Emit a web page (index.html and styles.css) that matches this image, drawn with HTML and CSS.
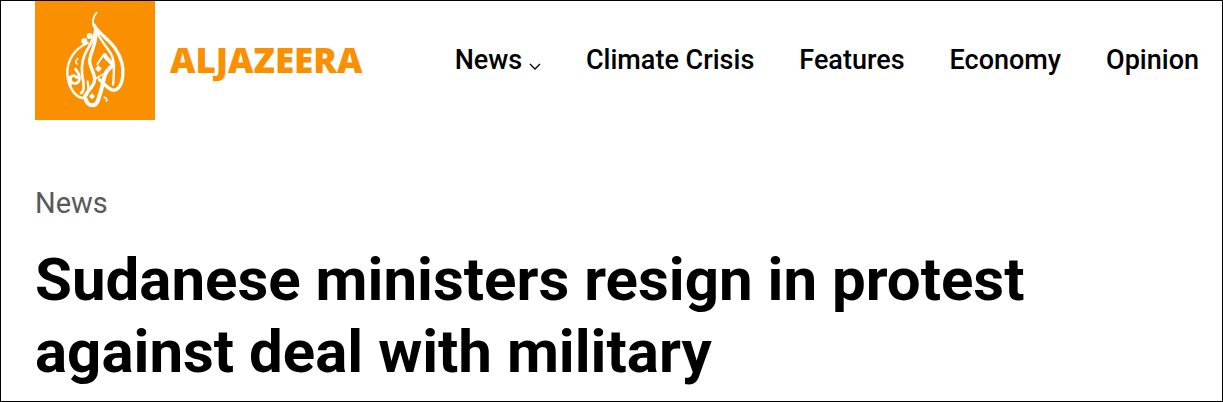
FILE: index.html
```
<!DOCTYPE html>
<html lang="en">
<head>
    <meta charset="UTF-8">
    <meta name="viewport" content="width=device-width, initial-scale=1.0">
    <title>Sudanese ministers resign in protest against deal with military</title>
    <link rel="stylesheet" href="styles.css">
</head>
<body>
    <header class="header">
        <a class="brand" href="#">
            <svg class="brand-logo" viewBox="0 3 360 357" aria-hidden="true">
                <rect width="360" height="360" fill="#fa9000"/>
                <g fill="none" stroke="#fff" stroke-linecap="round" stroke-linejoin="round">
                    <!-- flame tip and right side -->
                    <path d="M185 38C171 54 170 74 182 88" stroke-width="5"/>
                    <path d="M178 76C188 98 222 118 241 146C260 174 267 200 263 230C259 259 246 274 232 270C217 266 207 250 194 239" stroke-width="10"/>
                    <path d="M184 90C194 121 217 141 230 165C240 188 238 218 234 254" stroke-width="7"/>
                    <!-- left side -->
                    <path d="M158 129C121 144 95 180 97 222C98 258 120 292 143 294C160 292 162 270 158 245" stroke-width="7"/>
                    <path d="M181 88C179 121 160 139 149 164C137 192 139 219 145 247C148 268 145 276 138 279" stroke-width="8"/>
                    <path d="M183 98C184 134 166 155 164 182C163 204 183 220 178 244C173 265 151 279 149 290" stroke-width="10"/>
                    <!-- letters -->
                    <path d="M209 165C213 177 228 184 235 196C221 204 210 218 206 239C202 260 198 276 190 298C182 324 160 320 152 298" stroke-width="12"/>
                    <path d="M187 193L203 168M178 238L205 222" stroke-width="6"/>
                    <path d="M121 207C136 224 138 247 123 250C107 252 102 234 111 228C116 225 122 228 126 233M103 232L106 256" stroke-width="8"/>
                    <path d="M128 176C120 183 122 190 127 192M208 292C215 294 217 299 214 303" stroke-width="5"/>
                </g>
                <g fill="#fff">
                    <circle cx="164" cy="108" r="9"/>
                    <circle cx="148" cy="123" r="9"/>
                    <path d="M190 196l10 10-10 10-10-10zM171 280l9 9-9 9-9-9z"/>
                </g>
            </svg>
            <span class="brand-name">ALJAZEERA</span>
        </a>
        <nav class="nav">
            <a class="nav-link" href="#">News
                <svg class="chevron" viewBox="0 0 12 8" aria-hidden="true">
                    <path d="M1 1l5 5 5-5" fill="none" stroke="#000" stroke-width="1.3"/>
                </svg>
            </a>
            <a class="nav-link" href="#">Climate Crisis</a>
            <a class="nav-link" href="#">Features</a>
            <a class="nav-link" href="#">Economy</a>
            <a class="nav-link" href="#">Opinion</a>
        </nav>
    </header>
    <main class="article">
        <a class="topic" href="#">News</a>
        <h1 class="title">Sudanese ministers resign in protest against deal with military</h1>
    </main>
</body>
</html>
```
FILE: styles.css
```
* {
    box-sizing: border-box;
}
body {
    margin: 0;
    min-height: 100vh;
    border: 1px solid #000;
    background: #fff;
    color: #000;
    font-family: Roboto, Arial, sans-serif;
}
a {
    color: inherit;
    text-decoration: none;
}
.header {
    display: flex;
    align-items: center;
    justify-content: space-between;
    padding: 0 23px 0 34px;
}
.brand {
    display: flex;
    align-items: center;
    gap: 15px;
}
.brand-logo {
    display: block;
    width: 120px;
    height: 119px;
}
.brand-name {
    padding-bottom: 2px;
    color: #fa9000;
    font-family: "Open Sans", "Noto Sans", sans-serif;
    font-size: 35px;
    font-weight: 800;
    line-height: 40px;
}
.nav {
    display: flex;
    gap: 45px;
}
.nav-link {
    padding-bottom: 2px;
    font-size: 27px;
    font-weight: 500;
    line-height: 32px;
    white-space: nowrap;
}
.chevron {
    width: 12px;
    height: 8px;
    vertical-align: -2px;
}
.article {
    padding: 66px 34px 0;
}
.topic {
    display: block;
    color: #595959;
    font-size: 29px;
    line-height: 34px;
}
.title {
    max-width: 1060px;
    margin: 24px 0 0;
    font-size: 60px;
    font-weight: 700;
    line-height: 72px;
}
```
